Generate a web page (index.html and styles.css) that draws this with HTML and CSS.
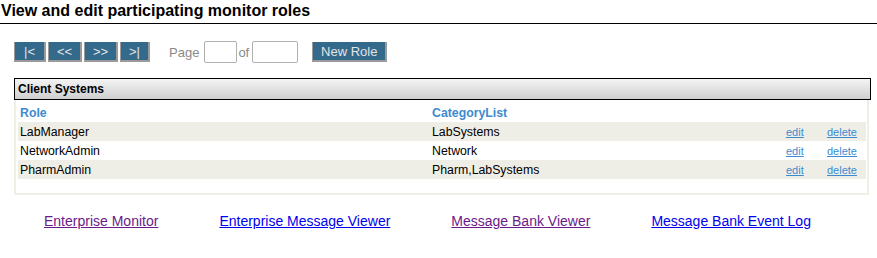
FILE: index.html
```html
<!DOCTYPE html>
<html>
<head>
    <title>Monitor Roles</title>
    <link rel="stylesheet" href="styles.css">
</head>
<body>
    <h1 class="page-title">View and edit participating monitor roles</h1>

    <div class="toolbar">
        <div class="pager">
            <button class="btn btn-first">|&lt;</button>
            <button class="btn btn-prev">&lt;&lt;</button>
            <button class="btn btn-next">&gt;&gt;</button>
            <button class="btn btn-last">&gt;|</button>
        </div>
        <span class="page-label">Page</span>
        <input class="page-input page-num" type="text">
        <span class="page-label page-of">of</span>
        <input class="page-input page-total" type="text">
        <button class="btn btn-new">New Role</button>
    </div>

    <div class="panel">
        <div class="panel-head">Client Systems</div>
        <div class="panel-body">
            <table class="roles">
                <thead>
                    <tr>
                        <th class="col-role">Role</th>
                        <th class="col-cat">CategoryList</th>
                        <th class="col-edit"></th>
                        <th class="col-del"></th>
                    </tr>
                </thead>
                <tbody>
                    <tr class="alt">
                        <td>LabManager</td>
                        <td>LabSystems</td>
                        <td><a href="#">edit</a></td>
                        <td><a href="#">delete</a></td>
                    </tr>
                    <tr>
                        <td>NetworkAdmin</td>
                        <td>Network</td>
                        <td><a href="#">edit</a></td>
                        <td><a href="#">delete</a></td>
                    </tr>
                    <tr class="alt">
                        <td>PharmAdmin</td>
                        <td>Pharm,LabSystems</td>
                        <td><a href="#">edit</a></td>
                        <td><a href="#">delete</a></td>
                    </tr>
                </tbody>
            </table>
        </div>
    </div>

    <div class="footer-links">
        <a class="visited" href="#">Enterprise Monitor</a>
        <a href="#">Enterprise Message Viewer</a>
        <a class="visited" href="#">Message Bank Viewer</a>
        <a href="#">Message Bank Event Log</a>
    </div>
</body>
</html>
```

FILE: styles.css
```css
body {
    margin: 0;
    padding: 0;
    font-family: Arial, "Liberation Sans", sans-serif;
    background-color: #fff;
}
.page-title {
    margin: 0;
    padding: 2px 0 3px 1px;
    line-height: 18px;
    font-size: 16px;
    font-weight: bold;
    color: #000;
    border-bottom: 1px solid #000;
}
.toolbar {
    display: flex;
    align-items: center;
    padding: 17px 0 0 14px;
    height: 22px;
}
.pager {
    display: flex;
    gap: 2px;
}
.btn {
    height: 20px;
    padding: 0;
    margin: 0;
    background-color: #336a8c;
    color: #e4e4e4;
    font-family: Arial, "Liberation Sans", sans-serif;
    font-size: 13px;
    border: none;
    border-right: 2px solid #9a9a9a;
    border-bottom: 2px solid #9a9a9a;
    border-left: 1px solid #9a9a9a;
}
.btn-first { width: 32px; }
.btn-prev { width: 34px; }
.btn-next { width: 34px; }
.btn-last { width: 30px; }
.page-label {
    color: #8a8a8a;
    font-size: 13px;
    margin-left: 19px;
    margin-right: 5px;
}
.page-of {
    margin-left: 1px;
    margin-right: 3px;
}
.page-input {
    height: 22px;
    box-sizing: border-box;
    border: 1px solid #b0b0b0;
    border-radius: 2px;
    margin: 0;
    padding: 0;
}
.page-num { width: 33px; }
.page-total { width: 46px; }
.btn-new {
    width: 75px;
    margin-left: 14px;
}
.panel {
    margin: 15px 6px 0 14px;
}
.panel-head {
    height: 20px;
    line-height: 20px;
    border: 1px solid #000;
    background: linear-gradient(#f4f4f4, #cfcfcf);
    padding-left: 3px;
    font-size: 12px;
    font-weight: bold;
    color: #000;
}
.panel-body {
    border: 2px solid #efefe6;
    border-top: none;
    padding: 3px 1px 14px 2px;
    margin-right: 2px;
}
.roles {
    width: 100%;
    border-collapse: collapse;
    font-size: 12.3px;
}
.roles th {
    text-align: left;
    color: #3d8ad0;
    font-weight: bold;
    height: 19px;
    padding: 0 0 0 2px;
}
.roles td {
    height: 19px;
    padding: 0 0 0 2px;
    color: #000;
}
.roles tr.alt td {
    background-color: #efeee6;
}
.col-role { width: 410px; }
.col-cat { width: 352px; }
.col-edit { width: 39px; }
.roles a {
    color: #3d8ad0;
    font-size: 11px;
}
.footer-links {
    display: flex;
    padding: 18px 0 0 44px;
    font-size: 14px;
}
.footer-links a {
    color: #0000ee;
    margin-right: 61px;
}
.footer-links a.visited {
    color: #6a1b8a;
}
```
